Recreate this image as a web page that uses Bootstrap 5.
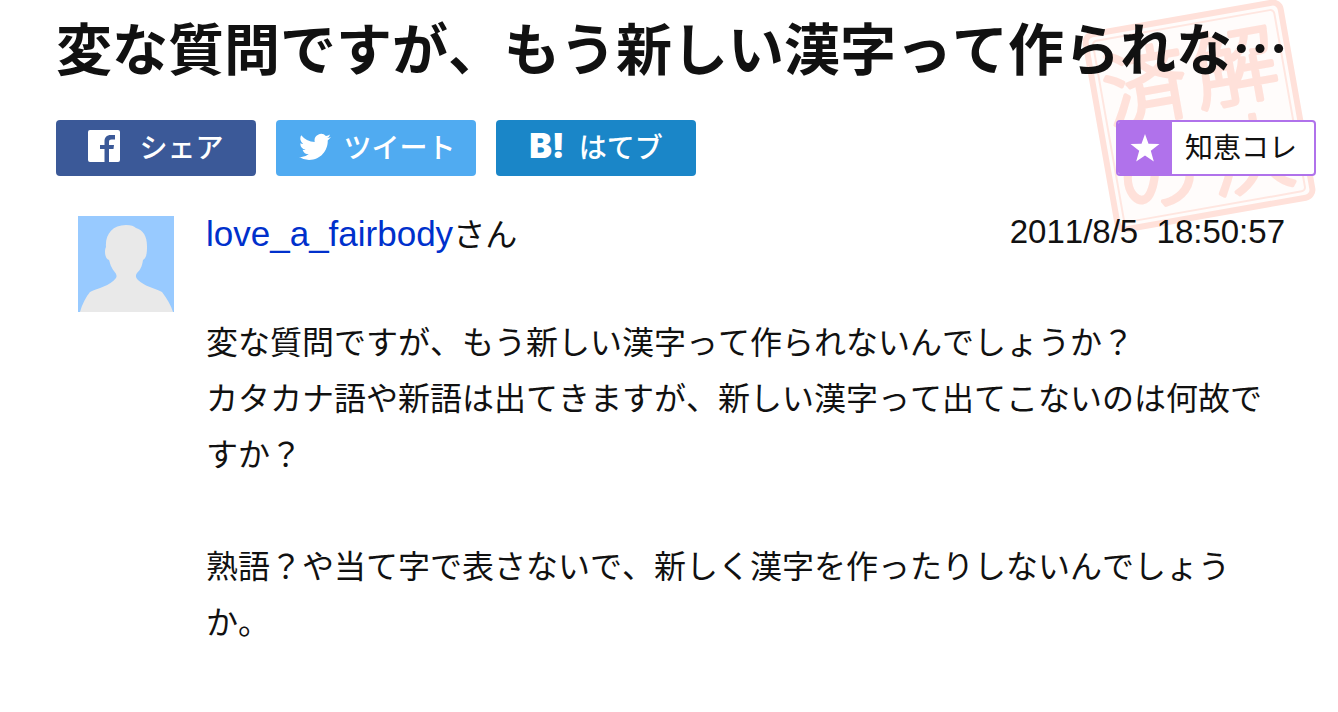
<!DOCTYPE html>
<html lang="ja">
<head>
<meta charset="utf-8">
<meta name="viewport" content="width=device-width, initial-scale=1">
<title>変な質問ですが、もう新しい漢字って作られな…</title>
<link rel="stylesheet" href="https://cdn.jsdelivr.net/npm/bootstrap@5.3.0/dist/css/bootstrap.min.css">
<style>
  body { font-family: "Noto Sans CJK JP", sans-serif; font-kerning: none; color: #111; background: #fff; }
  .question { padding: 4px 22px 56px 56px; }
  .question-title { font-size: 56px; line-height: 84px; font-weight: 700; }
  .share-row { margin-top: 32px; gap: 20px; }
  .share-btn { width: 200px; height: 56px; padding: 0 0 4px; border: 0; border-radius: 4px; font-size: 28px; line-height: 52px; color: #fff; font-weight: 500; }
  .share-btn:hover { color: #fff; }
  .share-fb { background: #3b5998 !important; gap: 19px; }
  .share-tw { background: #50abf1 !important; gap: 12px; padding-left: 3px; }
  .share-hb { background: #1a86c8 !important; gap: 14px; }
  .hatena-logo { font-family: Inter, sans-serif; font-weight: 900; font-size: 34px; }
  .chie-btn { width: 200px; height: 56px; padding: 0; border: 2px solid #b072eb; border-radius: 4px; background: #fff !important; font-size: 28px; line-height: 48px; color: #111; overflow: hidden; }
  .chie-star { width: 54px; background: #b072eb; }
  .asker { margin: 40px 31px 0 22px; gap: 32px; }
  .asker-name { font-size: 32px; line-height: 32px; }
  .asker-name a { color: #0030cc; font-size: 35px; font-family: "Liberation Sans", "Noto Sans CJK JP", sans-serif; }
  .asked-at { font-size: 33px; line-height: 32px; white-space: pre; font-family: "Liberation Sans", sans-serif; }
  .asker-text { margin-top: 62px; font-size: 32px; line-height: 56px; }
  .solved-stamp { top: 0; right: 14px; z-index: -1; overflow: visible; }
</style>
</head>
<body>
<main class="question position-relative z-0">
  <svg class="solved-stamp position-absolute" width="250" height="240" viewBox="0 0 250 240" role="img" aria-label="解決済の">
    <g transform="translate(125 116) rotate(-10)">
      <rect x="-99" y="-99" width="198" height="198" rx="8" fill="#fffcfb" stroke="#ffe1da" stroke-width="6"/>
      <rect x="-92" y="-92" width="184" height="184" rx="4" fill="none" stroke="#ffe6e0" stroke-width="2"/>
      <g fill="#ffe1da" stroke="#ffe1da" stroke-width="4" stroke-linejoin="round" font-size="84" font-weight="300" text-anchor="middle">
        <text x="44" y="-11">解</text>
        <text x="44" y="78">決</text>
        <text x="-48" y="-8">済</text>
        <text x="-50" y="80">の</text>
      </g>
    </g>
  </svg>

  <h1 class="question-title mb-0">変な質問ですが、もう新しい漢字って作られな…</h1>

  <div class="share-row d-flex">
    <button type="button" class="btn share-btn share-fb d-flex align-items-center justify-content-center">
      <svg width="32" height="32" viewBox="0 0 32 32" aria-hidden="true"><path fill="#fff" d="M2 0h28a2 2 0 0 1 2 2v28a2 2 0 0 1-2 2H21V19h4.500l.5-4h-5v-3c0-1.700.6-2.500 2.500-2.500H27V5h-4c-4.500 0-6.500 2.500-6.500 6.500V15H12v4h4.500v13H2a2 2 0 0 1-2-2V2a2 2 0 0 1 2-2z"/></svg>
      <span>シェア</span>
    </button>
    <button type="button" class="btn share-btn share-tw d-flex align-items-center justify-content-center">
      <svg width="32" height="32" viewBox="0 0 16 16" aria-hidden="true"><path fill="#fff" d="M5.026 15c6.038 0 9.341-5.003 9.341-9.334 0-.14 0-.282-.006-.422A6.685 6.685 0 0 0 16 3.542a6.658 6.658 0 0 1-1.889.518 3.301 3.301 0 0 0 1.447-1.817 6.533 6.533 0 0 1-2.087.793A3.286 3.286 0 0 0 7.875 6.030a9.325 9.325 0 0 1-6.767-3.429 3.289 3.289 0 0 0 1.018 4.382A3.323 3.323 0 0 1 .64 6.575v.045a3.288 3.288 0 0 0 2.632 3.218 3.203 3.203 0 0 1-.865.115 3.230 3.230 0 0 1-.614-.057 3.283 3.283 0 0 0 3.067 2.277A6.588 6.588 0 0 1 .78 13.580a6.320 6.320 0 0 1-.78-.045A9.344 9.344 0 0 0 5.026 15z"/></svg>
      <span>ツイート</span>
    </button>
    <button type="button" class="btn share-btn share-hb d-flex align-items-center justify-content-center">
      <span class="hatena-logo">B!</span>
      <span>はてブ</span>
    </button>
    <button type="button" class="btn chie-btn d-flex align-items-stretch ms-auto">
      <span class="chie-star d-flex align-items-center justify-content-center">
        <svg width="30" height="30" viewBox="0 0 30 30" aria-hidden="true"><path fill="#fff" d="M15 1l3.500 9.800 11 .3-8.700 6.600 3 10.800L15 22.500l-8.800 6 3-10.800L.5 11.100l11-.3z"/></svg>
      </span>
      <span class="flex-grow-1 text-center pe-1">知恵コレ</span>
    </button>
  </div>

  <article class="asker d-flex align-items-start">
    <svg class="flex-shrink-0" width="96" height="96" viewBox="0 0 96 96" role="img" aria-label="プロフィール画像">
      <rect width="96" height="96" fill="#98caff"/>
      <path fill="#e9e9e9" d="M2 96C4 88 8 81 12 76C20 72 32 70 38 62C40 58 36 56 34 52C32 49 32 46 31 44C27 43 26 35 28 31C27 19 34 9 48 9C53 9 56 10 58 12C65 14 69 20 69 30C69 35 69 42 65 44C64 51 62 54 59 57C57 60 58 62 60 64C66 70 76 72 84 76C89 83 93 89 95 96Z"/>
    </svg>
    <div class="flex-grow-1">
      <header class="d-flex justify-content-between align-items-start">
        <div class="asker-name"><a href="#" class="text-decoration-none">love_a_fairbody</a>さん</div>
        <time class="asked-at" datetime="2011-08-05T18:50:57">2011/8/5  18:50:57</time>
      </header>
      <div class="asker-text">変な質問ですが、もう新しい漢字って作られないんでしょうか？<br>カタカナ語や新語は出てきますが、新しい漢字って出てこないのは何故ですか？<br><br>熟語？や当て字で表さないで、新しく漢字を作ったりしないんでしょうか。</div>
    </div>
  </article>
</main>
<script src="https://cdn.jsdelivr.net/npm/bootstrap@5.3.0/dist/js/bootstrap.bundle.min.js"></script>
</body>
</html>
